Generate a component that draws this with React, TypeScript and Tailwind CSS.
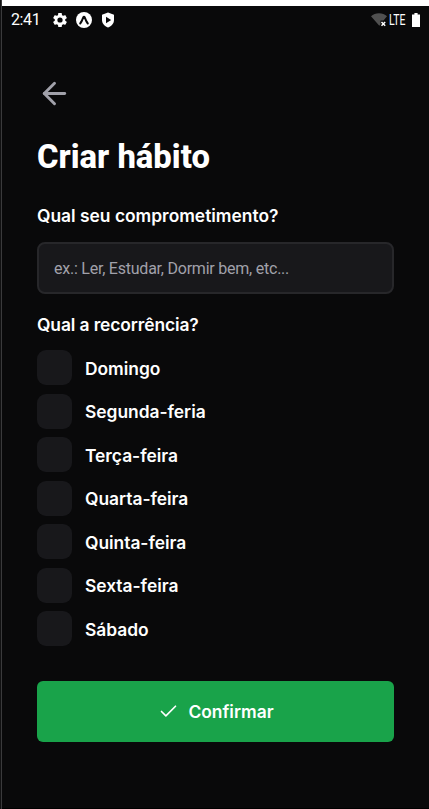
import { ArrowLeft, Check } from "lucide-react";

const days = [
  "Domingo",
  "Segunda-feria",
  "Terça-feira",
  "Quarta-feira",
  "Quinta-feira",
  "Sexta-feira",
  "Sábado",
];

function StatusBar() {
  return (
    <div className="flex h-[27px] items-center pr-[9px] pl-[9px] font-['Roboto',sans-serif] text-white">
      <span className="w-[41px] text-[16px] leading-none tracking-[-0.4px]">2:41</span>
      <svg className="h-4 w-4" viewBox="1 1 22 22" fill="currentColor">
        <path d="M19.14 12.94c.04-.3.06-.61.06-.94 0-.32-.02-.64-.07-.94l2.03-1.58a.49.49 0 0 0 .12-.61l-1.92-3.32a.488.488 0 0 0-.59-.22l-2.39.96c-.5-.38-1.03-.7-1.62-.94l-.36-2.54a.484.484 0 0 0-.48-.41h-3.84c-.24 0-.43.17-.47.41l-.36 2.54c-.59.24-1.13.57-1.62.94l-2.39-.96c-.22-.08-.47 0-.59.22L2.74 8.87c-.12.21-.08.47.12.61l2.03 1.58c-.05.3-.09.63-.09.94s.02.64.07.94l-2.03 1.58a.49.49 0 0 0-.12.61l1.92 3.32c.12.22.37.29.59.22l2.39-.96c.5.38 1.03.7 1.62.94l.36 2.54c.05.24.24.41.48.41h3.84c.24 0 .44-.17.47-.41l.36-2.54c.59-.24 1.13-.56 1.62-.94l2.39.96c.22.08.47 0 .59-.22l1.92-3.32c.12-.22.07-.47-.12-.61l-2.01-1.58zM12 15.6A3.6 3.6 0 1 1 12 8.4a3.6 3.6 0 0 1 0 7.2z" />
      </svg>
      <svg className="ml-2 h-4 w-4" viewBox="0 0 16 16">
        <circle cx="8" cy="8" r="8" fill="#fff" />
        <path d="M4.2 11.5C5.6 9.9 6.6 7.4 7.4 5.2C7.7 4.5 8.3 4.5 8.6 5.2C9.4 7.4 10.4 9.9 11.8 11.5" fill="none" stroke="#0a0a0b" strokeWidth="2" strokeLinecap="round" />
      </svg>
      <svg className="ml-2 h-4 w-4" viewBox="0 0 16 16">
        <path d="M8 .5L14 2.7V8C14 11.6 11.5 14.2 8 15.5C4.5 14.2 2 11.6 2 8V2.7Z" fill="#fff" />
        <path d="M6 4.7L11.2 8L6 11.3Z" fill="#0a0a0b" />
      </svg>
      <svg className="ml-auto h-4 w-[17px]" viewBox="0 0 17 16">
        <path d="M0 4.3C4 .2 12 .2 16 4.3L12.5 8.5H9.5V12.2L8.3 13.7Z" fill="#505050" />
        <path d="M10.5 10L14.2 13.7M14.2 10L10.5 13.7" stroke="#fff" strokeWidth="1.5" />
      </svg>
      <span className="ml-px w-[18px] origin-left scale-x-[.75] text-[14px] leading-none">LTE</span>
      <svg className="ml-[5px] h-[14px] w-2" viewBox="0 0 8 14">
        <path d="M2.4 0H5.6V1.5H8V14H0V1.5H2.4Z" fill="#fff" />
      </svg>
    </div>
  );
}

export default function App() {
  return (
    <div className="flex h-[809px] w-[429px] overflow-hidden bg-[#111112] font-['Inter',sans-serif] text-white">
      <div className="ml-px w-px bg-[#3a3a3c]" />
      <div className="flex-1 border-t-[6px] border-b border-t-white border-b-black bg-[#09090a]">
        <StatusBar />
        <main className="pr-[35px] pl-[35px] pt-[43px]">
          <button className="-ml-[0.5px] block h-[35px] w-[35px]" aria-label="Voltar">
            <ArrowLeft size={35} strokeWidth={2} className="text-[#a1a1aa]" />
          </button>
          <h1 className="mt-[27px] font-['Roboto',sans-serif] text-[32.8px] leading-[39px] font-extrabold">Criar hábito</h1>
          <h2 className="mt-[26px] text-[17.4px] leading-[26px] font-semibold">Qual seu comprometimento?</h2>
          <input
            className="mt-[13px] block h-[52px] w-full rounded-lg border-2 border-[#27272a] bg-[#18181b] px-[15px] font-['Roboto',sans-serif] text-[16px] tracking-[-0.23px] placeholder:text-[#a1a1aa]"
            placeholder="ex.: Ler, Estudar, Dormir bem, etc..."
          />
          <h2 className="mt-[18px] mb-[12px] text-[17.4px] leading-[26px] font-semibold tracking-[-0.1px]">Qual a recorrência?</h2>
          <div className="flex flex-col gap-[8.5px]">
            {days.map((day) => (
              <div key={day} className="flex h-[35px] items-center">
                <span className="h-[35px] w-[35px] rounded-[9px] bg-[#18181b]" />
                <span className="ml-[13px] pt-[3px] text-[17.4px] font-semibold tracking-[-0.02px]">{day}</span>
              </div>
            ))}
          </div>
          <button className="mt-[35px] flex h-[61px] w-full items-center justify-center rounded-md bg-[#19a34a]">
            <Check size={21} strokeWidth={1.9} className="ml-px" />
            <span className="ml-[9px] pt-[2px] text-[17.4px] font-semibold">Confirmar</span>
          </button>
        </main>
      </div>
    </div>
  );
}
